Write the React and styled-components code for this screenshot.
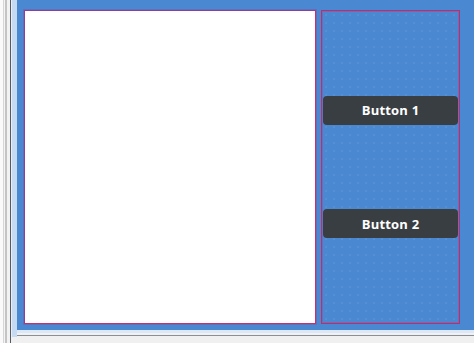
import React from "react";
import styled, { createGlobalStyle } from "styled-components";

const Global = createGlobalStyle`
  html, body { margin: 0; padding: 0; background: #f0f0f0; }
  body { font-family: "Open Sans", "DejaVu Sans", sans-serif; }
  * { box-sizing: border-box; }
`;

const Window = styled.div`
  width: 474px;
  height: 343px;
  display: flex;
  background: #f0f0f0;
  overflow: hidden;
`;

const Gutter = styled.div`
  width: 17px;
  flex: none;
  display: flex;
  flex-direction: column;
  background: linear-gradient(
    to right,
    #fafafa 0px,
    #fafafa 3px,
    #d6d6d6 3px,
    #d6d6d6 4px,
    #f4f4f4 4px,
    #f4f4f4 5px,
    #c4c4c4 5px,
    #c4c4c4 7px,
    #f2f2f2 7px,
    #f2f2f2 10px,
    #555a60 10px,
    #555a60 11px,
    #e8eef6 11px,
    #e8eef6 12px,
    #c6dbf2 12px,
    #c6dbf2 17px
  );
`;

const GutterFoot = styled.div`
  margin-top: auto;
  height: 6px;
  background: linear-gradient(
    to right,
    #fafafa 0px,
    #fafafa 3px,
    #d6d6d6 3px,
    #d6d6d6 4px,
    #f4f4f4 4px,
    #f4f4f4 5px,
    #c4c4c4 5px,
    #c4c4c4 7px,
    #f2f2f2 7px,
    #f2f2f2 10px,
    #555a60 10px,
    #555a60 11px,
    #f0f0f0 11px
  );
`;

const Main = styled.div`
  flex: 1;
  display: flex;
  flex-direction: column;
`;

const Stage = styled.div`
  height: 330px;
  flex: none;
  background: #4a89d1;
  padding: 10px 14px 6px 7px;
  display: flex;
  gap: 5px;
`;

const Canvas = styled.div`
  width: 292px;
  flex: none;
  background: #ffffff;
  border: 1px solid #c8306a;
  border-top-color: #8a3f98;
  border-left-color: #8a3f98;
  box-shadow: 0 0 0 1px rgba(150, 60, 150, 0.35);
`;

const Side = styled.div`
  flex: 1;
  border: 1px solid #b8306c;
  box-shadow: inset 0 0 0 1px rgba(160, 70, 150, 0.45);
  display: flex;
  flex-direction: column;
  justify-content: space-evenly;
  padding: 0 1px;
  background-color: #4a89d1;
  background-image: radial-gradient(circle, rgba(255, 255, 255, 0.06) 0.7px, transparent 1px);
  background-size: 8px 8px;
  background-clip: padding-box;
`;

const Button = styled.button`
  height: 29px;
  border: none;
  border-radius: 4px;
  background: #393e43;
  color: #ffffff;
  font-family: "Open Sans", "DejaVu Sans", sans-serif;
  font-weight: 700;
  font-size: 13px;
  letter-spacing: 0.2px;
  padding: 0;
  cursor: pointer;
`;

const Footer = styled.div`
  flex: 1;
  display: flex;
  flex-direction: column;
`;

const FootLight = styled.div`
  height: 4px;
  background: #dce8f5;
  border-bottom: 1px solid #eef3f9;
`;

const FootLine = styled.div`
  height: 1px;
  background: #8a8f96;
  margin-top: 1px;
`;

export default function App() {
  return (
    <>
      <Global />
      <Window>
        <Gutter>
          <GutterFoot />
        </Gutter>
        <Main>
          <Stage>
            <Canvas />
            <Side>
              <Button>Button 1</Button>
              <Button>Button 2</Button>
            </Side>
          </Stage>
          <Footer>
            <FootLight />
            <FootLine />
          </Footer>
        </Main>
      </Window>
    </>
  );
}
